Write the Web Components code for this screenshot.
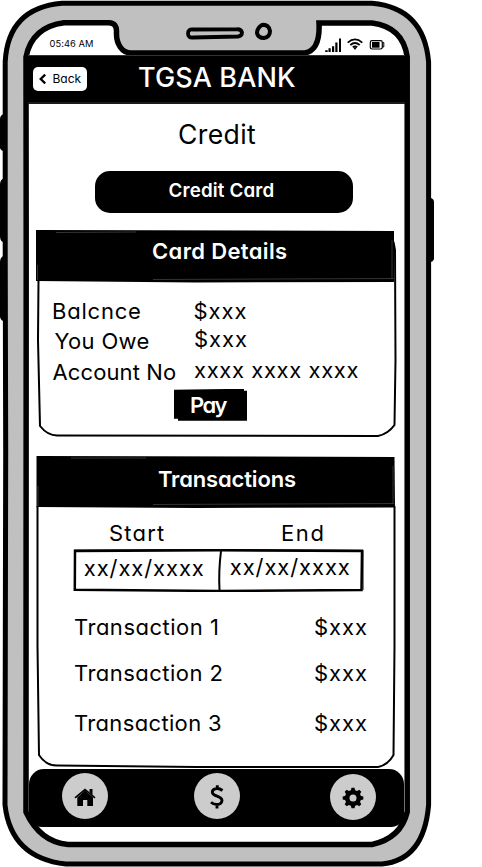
<!DOCTYPE html>
<html lang="en">
<head>
<meta charset="utf-8">
<title>TGSA Bank</title>
<style>
html,body{margin:0;background:#fff;color:#000}
body{width:482px;height:867px;overflow:hidden;font-family:Inter,"Open Sans",sans-serif}
</style>
</head>
<body>
<bank-app></bank-app>
<script>
const ink = document.createElement('canvas').getContext('2d');

// One line of text whose box is its cap height and whose ink fills the width "w".
class FitText extends HTMLElement {
  connectedCallback() {
    if (this.shadowRoot) return;
    const s = +this.getAttribute('size'), w = +this.getAttribute('w'), wt = this.getAttribute('weight') || 430;
    this.attachShadow({mode:'open'}).innerHTML = `<style>
      :host{display:block;flex:none;width:${w}px;height:${s*.727}px;line-height:${s*.727}px;font-size:${s}px;font-weight:${wt};white-space:nowrap;font-feature-settings:"cv11","ss03"}
      span{display:inline-block}</style><span><slot></slot></span>`;
    const span = this.shadowRoot.querySelector('span'), t = this.textContent;
    ink.font = `${wt} ${s}px Inter`;
    const a = ink.measureText(t[0]), b = ink.measureText(t[t.length-1]);
    const left = -a.actualBoundingBoxLeft, right = b.width - b.actualBoundingBoxRight;
    const sp = (w + left + right - span.getBoundingClientRect().width) / (t.length - 1);
    span.style.letterSpacing = sp + 'px';
    span.style.marginLeft = -left + 'px';
  }
}
customElements.define('fit-text', FitText);

const define = (name, html) => customElements.define(name, class extends HTMLElement {
  connectedCallback() {
    if (!this.shadowRoot) this.attachShadow({mode:'open'}).innerHTML = html;
  }
});

define('phone-frame', `<style>
  :host{display:grid;width:434px;height:867px}
  svg,.screen{grid-area:1/1}
  .screen{display:flex;flex-direction:column;margin-left:28px;width:377px;z-index:1}
  </style>
  <svg width="434" height="867" viewBox="0 0 434 867" fill="none" stroke="#000">
    <path fill="#000" stroke="none" d="M4 114Q0 115 0 119V148Q1 151 4 151ZM4 178Q0 180 0 184V236Q0 241 3 242V256Q0 258 0 262V317Q1 321 4 321ZM426 198H431Q434 199 434 202V259Q433 262 430 262H426Z"/>
    <path fill="#c0c0c0" fill-rule="evenodd" stroke="none" d="M5 62Q8 8 62 3H372Q424 10 429 62V805Q423 860 382 864H66Q12 858 5 805ZM27 57Q32 28 64 23H109Q117 24 117 33C117 45 123 52 131 53H305C315 52 320 43 319 23H372Q402 27 407 57V812Q402 837 372 844H68Q42 841 27 812Z"/>
    <path stroke-width="5" d="M5.200 250V62Q8 8 62 3.300H372Q424 8 428.600 62V805Q424 860 382 864H66Q11 858 5 805L5.700 450Z"/>
    <path stroke-width="5.500" d="M26.200 250L26 57Q32 27 64 22.800H109Q117 23 116.500 32C116 44 122 53 131 53H305C315 51 320 42 319 23H372Q403 27 407.200 57V812Q401 838 372 844.500H68Q40 842 26 812Z"/>
    <path stroke-width="3.800" d="M193 29.500Q188 29 188 33.500Q188 38 193 37.500L238 36.500Q242 36 242 32.500Q241 29 237 29.300Z"/>
    <path stroke-width="4" d="M262 25Q257 28 257 33Q258 38 264 38Q270 37 270 31Q269 24 262 25Z"/>
  </svg>
  <div class="screen"><slot></slot></div>`);

define('status-bar', `<style>
  :host{display:flex;flex:none;height:55px;box-sizing:border-box;padding:41.300px 19px 0 21.500px;align-items:flex-start;justify-content:space-between}
  svg{margin-top:-4.300px;flex:none}</style>
  <fit-text size="9.300" w="43.500">05:46 AM</fit-text>
  <svg width="61" height="16" viewBox="325 37 61 16">
    <path d="M325.200 50.300h2.500v1.700h-2.500zM328.500 48.300h2.200V52h-2.200zM332 46.300h2.200V52H332zM335.300 42.500h2.200V52h-2.200zM339 38.500h2V52h-2z"/>
    <g fill="none" stroke="#000" stroke-width="1.700"><path d="M347.700 42.600Q355 36.300 362.300 42.600M350.300 45Q355 41 359.700 45M352.700 47.200Q355 45.400 357.300 47.200"/></g><path d="M353 47.300h4L355 50z"/>
    <rect x="370.300" y="40.700" width="12" height="8.300" rx="1.700" fill="none" stroke="#000" stroke-width="1.200"/><rect x="372" y="42" width="7.500" height="5.700"/><path d="M382.500 42.500h1.300v4.500h-1.300" fill="none" stroke="#000"/>
  </svg>`);

define('app-header', `<style>
  :host{display:flex;flex:none;height:48.500px;background:#000;color:#fff;box-sizing:border-box;align-items:flex-start;padding:12px 0 0 5px;box-shadow:inset 0 1px #333,inset 0 -2px #1b1b1b}
  .back{display:flex;align-items:flex-start;box-sizing:border-box;width:54px;height:24px;border-radius:5px;background:#fff;color:#000;padding:7px 0 0 6px}
  svg{flex:none;margin-right:7.500px}
  .back fit-text{margin-top:.500px}
  .name{margin:.800px 0 0 52px}</style>
  <div class="back"><svg width="7" height="10" viewBox="0 0 7 10" fill="none" stroke="#000" stroke-width="2.300"><path d="M6.200.600L1.700 5L6.200 9.400"/></svg><fit-text size="12" w="28">Back</fit-text></div>
  <fit-text class="name" size="27" w="156" weight="530">TGSA BANK</fit-text>`);

define('sketch-button', `<style>
  :host{display:block;flex:none;background:#000;color:#fff;box-sizing:border-box}
  :host([pill]){border-radius:15px}
  :host([rough]){clip-path:polygon(0 1px,70px 0,70px 2px,100% 2px,100% 100%,4px 100%,4px 30px,0 30px)}</style><slot></slot>`);

define('sketch-card', `<style>
  :host{display:grid;flex:none;grid-template-rows:52px 1fr;width:361px}
  svg{grid-area:1/1/3/2;width:361px;height:100%;overflow:visible}
  header{grid-area:1/1;color:#fff;z-index:1}
  .body{grid-area:2/1;z-index:1;display:flex;flex-direction:column}</style>
  <svg fill="none" stroke="#000" stroke-width="2"></svg>
  <header><slot name="heading"></slot></header><div class="body"><slot></slot></div>`);

define('date-range', `<style>
  :host{display:grid;flex:none;width:291px;height:44px}
  svg,.dates{grid-area:1/1}.dates{display:flex;padding:12px 0 0 10.800px;gap:26px}
  .dates fit-text+fit-text{margin-top:-1.200px}</style>
  <svg width="291" height="44" fill="none" stroke="#000"><path stroke-width="2.500" d="M2 3L146 2.300L289 3L288.500 42L146 43L1.800 41.700Z"/><path stroke-width="2" d="M148 3Q145.500 23 146.500 42"/><path d="M1 2L147 1.500L290 2.200V42"/></svg>
  <div class="dates"><fit-text size="22" w="120">xx/xx/xxxx</fit-text><fit-text size="22" w="120">xx/xx/xxxx</fit-text></div>`);

define('data-row', `<style>:host{display:flex;flex:none;align-items:flex-start}</style><slot></slot>`);

define('tab-bar', `<style>
  :host{display:flex;flex:none;width:375px;height:58.500px;margin-left:1px;box-sizing:border-box;background:#000;border-radius:15px 15px 13px 13px;padding:4px 28px 0 33px;align-items:flex-start}
  svg{flex:none;background:#ccc;border-radius:50%}
  svg+svg{margin-left:86px}svg:last-child{margin:1px 0 0 90px}</style>
  <svg width="46" height="46" viewBox="62 773 46 46"><path d="M85 790.500L93 797.500V806H87.300V800H83V806H77.300V797.500ZM89.500 789H92.500V795L89.500 792Z"/><path d="M75 797.800L85 789.500L95 797.800" fill="none" stroke="#000" stroke-width="1.700"/></svg>
  <svg width="46" height="46" viewBox="194 773 46 46" fill="none" stroke="#000" stroke-width="2.900"><path d="M222.500 790.500Q219.500 788.300 216.500 788.600Q212.300 789 212.300 792.300C212.500 797 222 795.500 222 800.600Q221.500 804.300 217 804.500Q213.500 804.500 211 802.200M217.300 785.300V789M217 804V808.500"/></svg>
  <svg width="46" height="46" viewBox="330 774 46 46"><g transform="translate(353 798)"><circle r="5.800" fill="none" stroke="#000" stroke-width="4.600"/><path id="t" d="M-2.300 -7L-1.500 -10.300H1.500L2.300 -7ZM-2.300 7L-1.500 10.300H1.500L2.300 7Z"/><use href="#t" transform="rotate(45)"/><use href="#t" transform="rotate(90)"/><use href="#t" transform="rotate(135)"/></g></svg>`);

define('bank-app', `<style>
  :host{display:block}
  .title{margin:21.900px 0 0 151px}
  .cc{margin:26px 0 0 67px;width:258px;height:42px;padding:13.300px 0 0 73.500px}
  .one{margin:17px 0 0 8px;height:206px}
  .two{margin:20px 0 0 8px;height:312px}
  .pay{margin:9px 0 0 138px;width:73px;height:32px;padding:8.700px 0 0 17px}
  </style>
  <phone-frame>
    <status-bar></status-bar>
    <app-header></app-header>
    <fit-text class="title" size="26.600" w="77">Credit</fit-text>
    <sketch-button pill class="cc"><fit-text size="18.800" w="105" weight="560">Credit Card</fit-text></sketch-button>
    <sketch-card class="one">
      <fit-text slot="heading" style="margin:13px 0 0 117px" size="22" w="134" weight="560">Card Details</fit-text>
      <data-row style="margin:21.500px 0 0 17px"><fit-text size="22" w="87">Balcnce</fit-text><fit-text style="margin-left:54.500px" size="22" w="52">$xxx</fit-text></data-row>
      <data-row style="margin:12px 0 0 18.500px"><fit-text style="margin-top:2px" size="22" w="94">You Owe</fit-text><fit-text style="margin-left:46.500px" size="22" w="52">$xxx</fit-text></data-row>
      <data-row style="margin:12.500px 0 0 16.500px"><fit-text style="margin-top:2px" size="22" w="123.500">Account No</fit-text><fit-text style="margin-left:18px" size="22" w="164.500">xxxx xxxx xxxx</fit-text></data-row>
      <sketch-button rough class="pay"><fit-text size="22" w="36.500" weight="560">Pay</fit-text></sketch-button>
    </sketch-card>
    <sketch-card class="two">
      <fit-text slot="heading" style="margin:15px 0 0 122px" size="22" w="138" weight="560">Transactions</fit-text>
      <data-row style="margin:17px 0 0 74px"><fit-text size="22" w="54">Start</fit-text><fit-text style="margin-left:118px" size="22" w="40.500">End</fit-text></data-row>
      <date-range style="margin:7px 0 0 37px"></date-range>
      <data-row style="margin:27.500px 0 0 39px"><fit-text size="22" w="142">Transaction 1</fit-text><fit-text style="margin-left:98px" size="22" w="52">$xxx</fit-text></data-row>
      <data-row style="margin:30px 0 0 39px"><fit-text size="22" w="146.500">Transaction 2</fit-text><fit-text style="margin-left:93.500px" size="22" w="52">$xxx</fit-text></data-row>
      <data-row style="margin:34px 0 0 39px"><fit-text size="22" w="146">Transaction 3</fit-text><fit-text style="margin-left:94px" size="22" w="52">$xxx</fit-text></data-row>
    </sketch-card>
    <tab-bar style="margin-top:1px"></tab-bar>
  </phone-frame>`);

// Hand-drawn outlines of the two cards.
const root = document.querySelector('bank-app').shadowRoot;
root.querySelector('.one').shadowRoot.querySelector('svg').innerHTML =
  '<path fill="#000" stroke="none" d="M0 0L358 1V52L160 52.500L0 51Z"/><path d="M2.500 50L2 110L4 196Q12 206 22 205.500L340 206H342Q352 204 358.500 195L359.500 130L359 20L357.500 12"/><path stroke="#333" stroke-width="1" d="M20 2.500L100 2M117 49.500L358 48.500M356 10V48M1.500 35V50"/>';
root.querySelector('.two').shadowRoot.querySelector('svg').innerHTML =
  '<path fill="#000" stroke="none" d="M.500 0L358.500 1L359 51.500L160 52L.500 51Z"/><path d="M1.500 50L1.500 190L3 299Q10 310 22 309.500L160 311H342Q352 309 357.500 299L358.500 190V50"/><path stroke="#333" stroke-width="1" d="M35 2L110 2M117 48.500L358 47.500M357 10V48M2 30V50"/>';
</script>
</body>
</html>
